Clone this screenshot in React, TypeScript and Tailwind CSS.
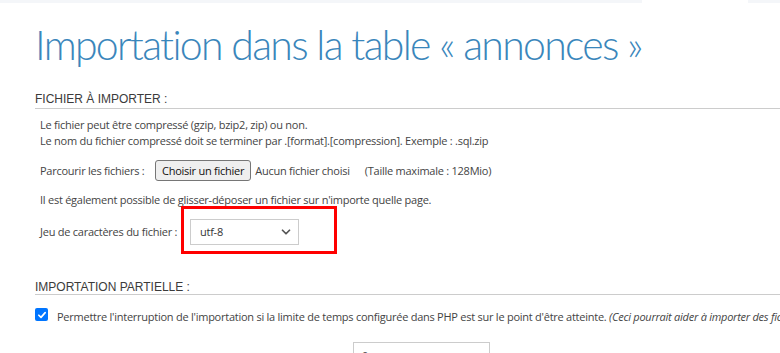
import { ChevronDown } from "lucide-react";

export default function App() {
  return (
    <div className="w-[780px] h-[353px] overflow-hidden bg-white relative font-['Open_Sans','Noto_Sans',sans-serif] text-[#444]">
      {/* top strip */}
      <div className="flex h-[3px]">
        <div className="w-[642px] bg-[#f4f6f9]" />
        <div className="w-[106px] bg-white" />
        <div className="flex-1 bg-[#f4f6f9]" />
      </div>

      <div className="pl-[35px]">
        <h2 className="mt-[17px] h-[50px] font-['Lato','Open_Sans',sans-serif] text-[41px] leading-[50px] font-light text-[#3a86bb] tracking-[-1.7px] whitespace-nowrap">
          Importation dans la table « annonces »
        </h2>

        {/* Fichier à importer */}
        <div className="mt-[22px] w-[800px] border-b border-[#cccccc] h-[17px] font-['Liberation_Sans',Arial,sans-serif] text-[12px] leading-[14px] text-[#3b3b3b]">
          FICHIER À IMPORTER :
        </div>

        <div className="pl-[5px] text-[11px] leading-[16px] tracking-[-0.25px] whitespace-nowrap">
          <p className="mt-[8px]">Le fichier peut être compressé (gzip, bzip2, zip) ou non.</p>
          <p>Le nom du fichier compressé doit se terminer par .[format].[compression]. Exemple : .sql.zip</p>

          <div className="mt-[11px] flex items-center h-[21px]">
            <span className="w-[115px]">Parcourir les fichiers :</span>
            <span className="h-[21px] px-[6px] flex items-center border border-[#767676] rounded-[3px] bg-[#efefef] text-[#111]">
              Choisir un fichier
            </span>
            <span className="ml-[4px]">Aucun fichier choisi</span>
            <span className="ml-[15px]">(Taille maximale : 128Mio)</span>
          </div>

          <p className="mt-[11px]">Il est également possible de glisser-déposer un fichier sur n'importe quelle page.</p>

          <div className="mt-[11px] flex items-center h-[26px]">
            <span className="w-[150px]">Jeu de caractères du fichier :</span>
            <div className="relative">
              <div className="w-[109px] h-[26px] border border-[#cccccc] flex items-center justify-between pl-[9px] pr-[5px] text-[#333]">
                <span>utf-8</span>
                <ChevronDown className="w-[14px] h-[14px] text-[#555]" strokeWidth={3} />
              </div>
              <div className="absolute left-[-9px] top-[-13px] w-[156px] h-[48px] border-[3px] border-[#ff0000]" />
            </div>
          </div>
        </div>

        {/* Importation partielle */}
        <div className="mt-[35px] w-[800px] border-b border-[#cccccc] h-[15px] font-['Liberation_Sans',Arial,sans-serif] text-[12px] leading-[14px] text-[#3b3b3b]">
          IMPORTATION PARTIELLE :
        </div>

        <div className="mt-[13px] flex items-start gap-[9px] text-[11px] tracking-[-0.25px] whitespace-nowrap">
          <span className="w-[13px] h-[13px] rounded-[2px] bg-[#0075ff] flex items-center justify-center shrink-0">
            <svg viewBox="0 0 12 12" className="w-[10px] h-[10px]">
              <path d="M2.2 6.3 L4.8 8.8 L9.8 3.2" fill="none" stroke="white" strokeWidth="2" strokeLinecap="round" strokeLinejoin="round" />
            </svg>
          </span>
          <span className="mt-[1px] leading-[16px]">
            Permettre l'interruption de l'importation si la limite de temps configurée dans PHP est sur le point d'être atteinte.{" "}
            <i>(Ceci pourrait aider à importer des fichiers volumineux, au détriment du respect des transactions.)</i>
          </span>
        </div>

        <div className="mt-[17px] pl-[5px] flex items-start text-[11px] tracking-[-0.25px] whitespace-nowrap">
          <span className="w-[313px] pt-[7px]">Sauter ce nombre de requêtes (pour SQL) à partir de la première :</span>
          <div className="w-[137px] h-[26px] border border-[#cccccc] pl-[8px] pt-[5px]">0</div>
        </div>
      </div>
    </div>
  );
}
